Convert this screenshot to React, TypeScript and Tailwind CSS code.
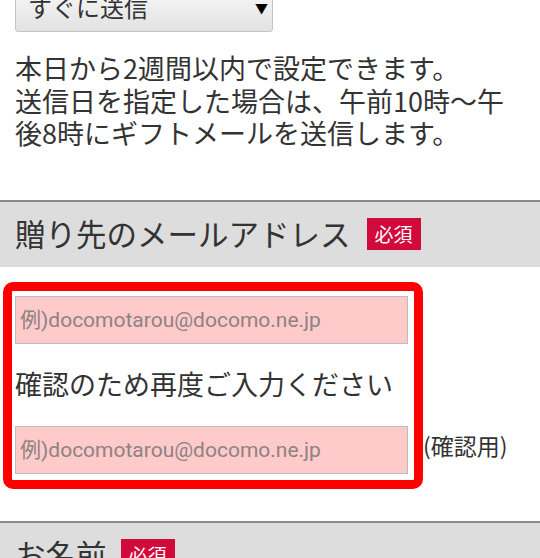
const jp = "font-['Noto_Sans_CJK_JP',sans-serif]";

const Badge = ({ gap }: { gap: string }) => (
  <span className={`${gap} inline-flex h-[32px] items-center bg-[#d20a3c] px-[8px] text-[19px] leading-none text-white`}>
    必須
  </span>
);

const SectionHeader = ({ label, gap }: { label: string; gap: string }) => (
  <div className="flex h-[67px] items-center border-t-2 border-[#8a8a8a] bg-[#dddddd] px-[15px] pb-[1px]">
    <span className="text-[30.5px] leading-none text-[#333]">{label}</span>
    <Badge gap={gap} />
  </div>
);

const MailInput = () => (
  <input
    type="email"
    placeholder="例)docomotarou@docomo.ne.jp"
    className="block h-[48px] w-[393px] border border-[#bdbdbd] bg-[#ffcaca] pl-[4px] font-['Roboto','Noto_Sans_CJK_JP',sans-serif] text-[21px] text-[#555] outline-none placeholder:text-[#8e8282]"
  />
);

export default function App() {
  return (
    <div className={`h-[558px] w-[540px] overflow-hidden bg-white text-[#333] ${jp}`}>
      <div className="px-[15px]">
        <div className="-mt-[18px] flex h-[50px] w-[258px] items-center justify-between rounded-[3px] border border-[#c4c4c4] bg-gradient-to-b from-[#fafafa] to-[#e2e2e2] pl-[12px] pr-[4px]">
          <span className="text-[24px] leading-none">すぐに送信</span>
          <span className="text-[13px] leading-none text-black">▼</span>
        </div>

        <p className="mt-[20px] whitespace-nowrap text-[27px] leading-[32.5px]">
          本日から2週間以内で設定できます。
          <br />
          送信日を指定した場合は、午前10時〜午
          <br />
          後8時にギフトメールを送信します。
        </p>
      </div>

      <div className="mt-[50px]">
        <SectionHeader label="贈り先のメールアドレス" gap="ml-[16px]" />
      </div>

      <div className="mt-[15px] flex items-end pl-[3px]">
        <div className="w-[420px] rounded-[10px] border-[9px] border-[#ff0000] pb-[6px] pl-[3px] pt-[5px]">
          <MailInput />
          <p className="mt-[20px] h-[40px] text-[27px] leading-[40px]">確認のため再度ご入力ください</p>
          <div className="mt-[22px]">
            <MailInput />
          </div>
        </div>
        <span className="mb-[29px] text-[23px] leading-[30px]">(確認用)</span>
      </div>

      <div className="mt-[32px]">
        <SectionHeader label="お名前" gap="ml-[14px]" />
      </div>
    </div>
  );
}
